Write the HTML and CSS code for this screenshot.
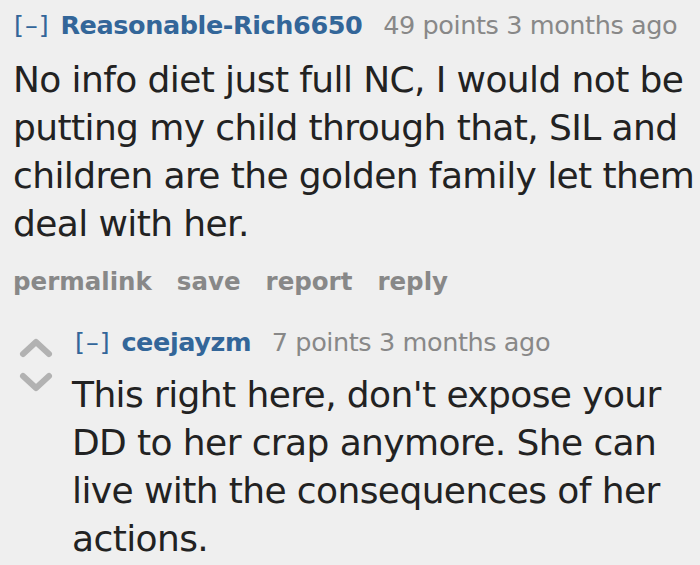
FILE: index.html
```html
<!DOCTYPE html>
<html>
<head>
<meta charset="utf-8">
<link rel="stylesheet" href="styles.css">
</head>
<body>
<div class="comment">
  <div class="entry">
    <p class="tagline"><a class="expand">[–]</a> <a class="author">Reasonable-Rich6650</a> <span class="score">49 points</span> <time>3 months ago</time></p>
    <div class="md"><p>No info diet just full NC, I would not be putting my child through that, SIL and children are the golden family let them deal with her.</p></div>
    <ul class="buttons">
      <li><a>permalink</a></li>
      <li><a>save</a></li>
      <li><a>report</a></li>
      <li><a>reply</a></li>
    </ul>
  </div>
  <div class="child">
    <div class="nested">
      <div class="midcol">
        <svg class="arrow" width="36" height="24" viewBox="0 0 36 24"><path d="M5 18 L18 6 L31 18" fill="none" stroke="#b2b2b2" stroke-width="6" stroke-linecap="round" stroke-linejoin="round"/></svg>
        <svg class="arrow" width="36" height="24" viewBox="0 0 36 24"><path d="M5 6 L18 18 L31 6" fill="none" stroke="#b2b2b2" stroke-width="6" stroke-linecap="round" stroke-linejoin="round"/></svg>
      </div>
      <div class="entry">
        <p class="tagline"><a class="expand">[–]</a> <a class="author">ceejayzm</a> <span class="score">7 points</span> <time>3 months ago</time></p>
        <div class="md second"><p>This right here, don't expose your DD to her crap anymore. She can live with the consequences of her actions.</p></div>
      </div>
    </div>
  </div>
</div>
</body>
</html>
```
FILE: styles.css
```css
html, body {
  margin: 0;
  padding: 0;
  background: #efefef;
}
body {
  font-family: "DejaVu Sans", Verdana, sans-serif;
  color: #222;
  overflow: hidden;
  height: 565px;
}
.comment {
  padding: 8px 0 0 13px;
}
.tagline {
  margin: 0;
  font-size: 25.5px;
  line-height: 34px;
  letter-spacing: -0.4px;
  color: #888;
}
.expand {
  color: #369;
  letter-spacing: 1px;
  margin-left: 1px;
  margin-right: 3px;
}
.author {
  color: #369;
  font-weight: bold;
  margin-right: 13px;
}
.nested .expand {
  margin-left: 3px;
}
.md p {
  margin: 14px 0 0 0;
  font-size: 36px;
  line-height: 48px;
  letter-spacing: -0.6px;
  color: #222;
}
.md.second p {
  margin-top: 12px;
}
.buttons {
  list-style: none;
  margin: 19px 0 0 0;
  padding: 0;
  display: flex;
  gap: 25px;
  font-size: 24.5px;
  line-height: 30px;
  font-weight: bold;
  color: #888;
}
.child {
  margin-top: 28px;
}
.nested {
  display: flex;
}
.midcol {
  display: flex;
  flex-direction: column;
  gap: 10px;
  flex: 0 0 54px;
  margin-left: 5px;
  padding-top: 11px;
}
.arrow {
  display: block;
}
```
